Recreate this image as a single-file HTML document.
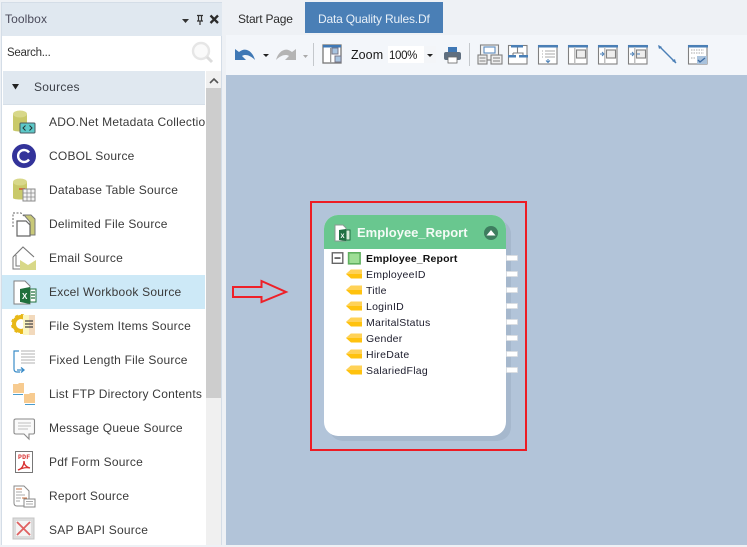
<!DOCTYPE html>
<html><head><meta charset="utf-8">
<style>
html,body{margin:0;padding:0}
body{width:747px;height:545px;position:relative;overflow:hidden;background:#eef1f5;font-family:"Liberation Sans",sans-serif;color:#333}
.a{position:absolute}
.t{position:absolute;white-space:nowrap;font-size:12px;line-height:16px}
.row{position:absolute;left:3px;width:202px;height:34px;overflow:hidden}
.row span{position:absolute;left:46px;top:9px;font-size:12px;line-height:16px;letter-spacing:.22px;white-space:nowrap;color:#3a3a3a}
svg{position:absolute;overflow:visible}
.f{position:absolute;left:366px;font-size:10.5px;line-height:14px;color:#1c1c2c;letter-spacing:.25px;white-space:nowrap}
.k{position:absolute;left:346px;width:16px;height:10px}
.p{position:absolute;left:506px;width:10px;height:4px;background:#fff;border:1px solid #d9dde2;border-radius:1px}
</style></head><body>

<!-- toolbox -->
<div class="a" style="left:1px;top:2px;width:221px;height:543px;background:#fff;border:1px solid #d4dde7;border-bottom:0;box-sizing:border-box"></div>
<div class="a" style="left:2px;top:3px;width:220px;height:33px;background:#e0e8f0"></div>
<div class="t" style="left:5px;top:11px;font-size:12px;color:#4a4a5a;letter-spacing:.1px">Toolbox</div>
<svg style="left:182px;top:14px" width="40" height="12">
<path d="M0 5h7l-3.500 4z" fill="#333"/>
<path d="M15 1.500h6M16.500 1.500v5.500M19.500 1.500v5.500M15 7h6M18 7v4" stroke="#333" stroke-width="1.200" fill="none"/>
<path d="M28.500 1.500l7.500 7.500M36 1.500L28.500 9" stroke="#2b2b2b" stroke-width="2.300"/>
</svg>
<div class="t" style="left:7px;top:45px;color:#333;font-size:11.500px;letter-spacing:-.28px">Search...</div>
<svg style="left:191px;top:41px" width="24" height="22">
<circle cx="10" cy="10" r="8" fill="#fafafa" stroke="#e6e6e6" stroke-width="2.400"/>
<path d="M16 16l5 5" stroke="#dcdcdc" stroke-width="3"/>
</svg>
<div class="a" style="left:3px;top:71px;width:202px;height:34px;background:#e0e8f0;border-bottom:1px solid #d6dfe8;box-sizing:border-box"></div>
<svg style="left:12px;top:84px" width="8" height="6"><path d="M0 0h7L3.500 5.500z" fill="#222"/></svg>
<div class="t" style="left:34px;top:79px;letter-spacing:.25px;color:#3c4048">Sources</div>

<!-- scrollbar -->
<div class="a" style="left:206px;top:71px;width:15px;height:474px;background:#f0f0f0"></div>
<div class="a" style="left:206px;top:88px;width:15px;height:310px;background:#cdcdcd"></div>
<svg style="left:209px;top:77px" width="10" height="7"><path d="M1 6l4-4 4 4" fill="none" stroke="#555" stroke-width="1.600"/></svg>

<!-- rows -->
<div class="row" style="top:105px"><span>ADO.Net Metadata Collection</span></div>
<div class="row" style="top:139px"><span>COBOL Source</span></div>
<div class="row" style="top:173px"><span>Database Table Source</span></div>
<div class="row" style="top:207px"><span>Delimited File Source</span></div>
<div class="row" style="top:241px"><span>Email Source</span></div>
<div class="row" style="top:275px;background:#cde9f7;left:2px;width:203px"><span style="left:47px">Excel Workbook Source</span></div>
<div class="row" style="top:309px"><span>File System Items Source</span></div>
<div class="row" style="top:343px"><span>Fixed Length File Source</span></div>
<div class="row" style="top:377px"><span>List FTP Directory Contents</span></div>
<div class="row" style="top:411px"><span>Message Queue Source</span></div>
<div class="row" style="top:445px"><span>Pdf Form Source</span></div>
<div class="row" style="top:479px"><span>Report Source</span></div>
<div class="row" style="top:513px"><span>SAP BAPI Source</span></div>

<!-- row icons -->
<svg style="left:13px;top:110px" width="24" height="24">
<path d="M0 4v16c0 2 14 2 14 0V4z" fill="#c9c96a"/><ellipse cx="7" cy="4" rx="7" ry="3.500" fill="#d8d88a"/>
<rect x="7" y="13" width="15" height="10" rx="1" fill="#5cc8c8" stroke="#4a5a60"/>
<path d="M12.500 15.500l-2.500 2.500 2.500 2.500M16.500 15.500l2.500 2.500-2.500 2.500" stroke="#233" fill="none"/>
</svg>
<svg style="left:12px;top:144px" width="24" height="24">
<circle cx="12" cy="12" r="12" fill="#33339a"/>
<path d="M17 8.500a6 6 0 1 0 0 7" fill="none" stroke="#fff" stroke-width="2.400"/>
</svg>
<svg style="left:13px;top:178px" width="23" height="24">
<path d="M0 4v16c0 2 14 2 14 0V4z" fill="#c9c96a"/><ellipse cx="7" cy="4" rx="7" ry="3.500" fill="#d8d88a"/>
<rect x="6" y="10" width="6" height="2" fill="#d0703c"/>
<rect x="10" y="11" width="12" height="12" fill="#f4f4f4" stroke="#8a8a8a"/>
<path d="M10 15h12M10 19h12M14 11v12M18 11v12" stroke="#8a8a8a" stroke-width=".8"/>
</svg>
<svg style="left:12px;top:212px" width="24" height="24">
<path d="M1 15V1h8l3 3" fill="none" stroke="#666" stroke-dasharray="2 1.500"/>
<path d="M12 3h7l4 4v16h-5V10z" fill="#c8c878" stroke="#777"/>
<path d="M5 9h9l4 4v11H5z" fill="#fff" stroke="#666" stroke-width="1.200"/>
</svg>
<svg style="left:12px;top:246px" width="25" height="24">
<path d="M1 11L11 1l11 10" fill="none" stroke="#777" stroke-width="1.100"/>
<path d="M1 11v12h7M4 9v11h5" fill="none" stroke="#777"/>
<path d="M8 14h16v10H8z" fill="#d8d888"/><path d="M8 14h16l-8 5z" fill="#fff"/>
</svg>
<svg style="left:13px;top:280px" width="24" height="24">
<path d="M1 1h11l5 5v18H1z" fill="#fff" stroke="#808080"/>
<path d="M7 9l10-2v17l-10-2z" fill="#20703c"/>
<rect x="17" y="9" width="6" height="13" fill="#fff" stroke="#20703c"/>
<path d="M18 12h4M18 15h4M18 18h4" stroke="#20703c" stroke-width="1.300"/>
<text x="9" y="19" font-size="8" font-weight="bold" fill="#fff" font-family="Liberation Sans">X</text>
</svg>
<svg style="left:12px;top:314px" width="24" height="22">
<circle cx="9" cy="10" r="7" fill="none" stroke="#e8b818" stroke-width="4"/>
<circle cx="9" cy="10" r="9" fill="none" stroke="#e8b818" stroke-width="2" stroke-dasharray="3 3"/>
<rect x="11" y="1" width="7" height="20" fill="#fbf6c0"/>
<path d="M17 1h6v20h-6z" fill="#f2d9bc"/>
<path d="M13 7h8M13 10h8M13 13h8" stroke="#444" stroke-width="1.300"/>
</svg>
<svg style="left:13px;top:350px" width="23" height="24">
<path d="M6 1H1v18c0 2 1 3 3 3h3" fill="none" stroke="#3a8cc8" stroke-width="1.200"/>
<path d="M8 1h14M8 4h14M8 7h14M8 10h14M8 13h14" stroke="#b0b0b0"/>
<path d="M4 20h6M8 17.500l3 2.500-3 2.500" fill="none" stroke="#3a8cc8" stroke-width="1.300"/>
</svg>
<svg style="left:13px;top:383px" width="23" height="24">
<path d="M0 1h5l1-1h5v10H0z" fill="#f7cb90"/><rect x="0" y="11" width="10" height="1" fill="#4a9ccc"/>
<path d="M11 11h5l1-1h5v10H11z" fill="#f7cb90"/><rect x="12" y="21" width="10" height="1" fill="#4a9ccc"/>
</svg>
<svg style="left:13px;top:418px" width="22" height="22">
<path d="M3 1h17q1.500 0 1.500 1.500v12q0 1.500-1.500 1.500h-4v5l-5-5H3q-2 0-2-1.500v-12Q1 1 3 1z" fill="#fafafa" stroke="#8a8a8a" stroke-width="1.100"/>
<path d="M5 5h13M5 8h13M5 11h10" stroke="#bdbdbd"/>
</svg>
<svg style="left:15px;top:451px" width="19" height="22">
<rect x=".5" y=".5" width="17" height="21" fill="#fff" stroke="#777"/>
<text x="3" y="8" font-size="6.500" font-weight="bold" fill="#d83030" font-family="Liberation Mono" letter-spacing=".2">PDF</text>
<path d="M3 19c4-1 6-5 6-9 0 4 2 6 6 7-4-1-8 0-12 2z" fill="none" stroke="#d83030" stroke-width="1.300"/>
</svg>
<svg style="left:13px;top:485px" width="23" height="23">
<path d="M1 1h10l5 5v15H4q-3 0-3-3z" fill="#fff" stroke="#888"/>
<path d="M3 4h6" stroke="#c87040"/><path d="M3 7h6M3 10h9M3 13h5M3 16h4" stroke="#aaa"/><path d="M9 13h5" stroke="#c87040"/>
<rect x="11" y="14" width="11" height="8" fill="#fff" stroke="#888"/><path d="M13 16.500h7M13 19h7" stroke="#aaa"/>
</svg>
<svg style="left:13px;top:518px" width="22" height="22">
<rect x="0" y="0" width="21" height="21" fill="#dcdcdc" stroke="#c4c4c4"/>
<rect x="3" y="3" width="15" height="15" fill="#f4f4f4"/>
<path d="M4 4l13 13M17 4L4 17" stroke="#e06060" stroke-width="1.800"/>
</svg>

<!-- tabs -->
<div class="t" style="left:238px;top:11px;letter-spacing:-.2px;color:#2d2d2d">Start Page</div>
<div class="a" style="left:305px;top:2px;width:138px;height:31px;background:#4a7fb6"></div>
<div class="t" style="left:318px;top:11px;color:#e8f0f8;letter-spacing:-.18px">Data Quality Rules.Df</div>

<!-- toolbar -->
<div class="a" style="left:226px;top:35px;width:521px;height:40px;background:#f3f6fa"></div>
<div class="a" style="left:226px;top:75px;width:521px;height:470px;background:#b2c4d9"></div>
<svg style="left:226px;top:35px" width="521" height="40" font-family="Liberation Sans">
<path d="M9 14V25H20L16 21C19 19 24 20 29 25C27 17 20 11 13 17z" fill="#3f78b5"/>
<path d="M37 19h6l-3 3z" fill="#222"/>
<path d="M70 14V25H59L63 21C60 19 55 20 50 25C52 17 59 11 66 17z" fill="#b4b4b4"/>
<path d="M77 20h5l-2.500 3z" fill="#aaa"/>
<rect x="87" y="8" width="1" height="23" fill="#c4c8cc"/>
<rect x="97" y="10" width="18" height="18" fill="#fff" stroke="#777" stroke-width="1.300"/>
<rect x="97" y="10" width="18" height="2.500" fill="#3f78b5"/>
<rect x="104" y="13" width="1.300" height="15" fill="#999"/>
<rect x="106" y="13" width="6" height="6" fill="#a8c4e0" stroke="#778"/>
<rect x="109" y="21" width="6" height="6" fill="#a8c4e0" stroke="#778"/>
<text x="125" y="24" font-size="12.500" fill="#1a1a1a" letter-spacing=".05">Zoom</text>
<rect x="162" y="11" width="48" height="17" fill="#fff"/>
<text x="163" y="24" font-size="11.500" fill="#1a1a1a" letter-spacing="-.35">100%</text>
<rect x="198" y="11" width="12" height="17" fill="#f3f5f8"/>
<path d="M201 19h6l-3 3z" fill="#222"/>
<rect x="222" y="12" width="9" height="6" fill="#3f78b5"/>
<rect x="218" y="17" width="17" height="8" rx="2" fill="#5f6f80"/>
<rect x="222" y="22" width="9" height="6" fill="#fff" stroke="#666" stroke-width=".8"/>
<rect x="243" y="8" width="1" height="23" fill="#c4c8cc"/>
</svg>

<!-- right toolbar icons -->
<svg style="left:478px;top:44px" width="240" height="24" fill="none">
<g stroke="#808080" stroke-width="1.100">
<rect x="2.500" y="1" width="18" height="15" fill="#f4f4f4"/><rect x="6" y="3" width="11" height="6" fill="#fff" stroke="#5a8abf"/>
<rect x="0" y="11" width="9" height="9" fill="#eee"/><rect x="13" y="11" width="11" height="9" fill="#eee"/>
<path d="M1.500 14h6M1.500 17h6M15 14h7M15 17h7"/>
<rect x="30.500" y="1.500" width="18.500" height="18.500" fill="#fff"/>
<rect x="60.500" y="1.500" width="18.500" height="18.500" fill="#fff"/>
<rect x="90.500" y="1.500" width="18.500" height="18.500" fill="#fff"/>
<rect x="120.500" y="1.500" width="18.500" height="18.500" fill="#fff"/>
<rect x="150.500" y="1.500" width="18.500" height="18.500" fill="#fff"/>
<rect x="210.500" y="1.500" width="18.500" height="18.500" fill="#fff"/>
<rect x="98.500" y="6" width="9" height="8" fill="#eee"/><rect x="128.500" y="6" width="9" height="8" fill="#eee"/><rect x="158.500" y="6" width="9" height="8" fill="#eee"/>
<path d="M39.500 3v6M35 9h10v3M35 9v3"/>
</g>
<g fill="#4a7fb6">
<rect x="33" y="1" width="12" height="2.500"/><rect x="30" y="11" width="8" height="2.500"/><rect x="41" y="11" width="9" height="2.500"/>
<rect x="60" y="1" width="20" height="2.500"/><rect x="90" y="1" width="20" height="2.500"/><rect x="120" y="1" width="20" height="2.500"/><rect x="150" y="1" width="20" height="2.500"/><rect x="210" y="1" width="20" height="2.500"/>
</g>
<path d="M64 7h1M64 10h1M64 13h1M67 7h10M67 10h10M67 13h10" stroke="#aaa"/>
<path d="M70 15v3M68 16.500l2 2 2-2" stroke="#4a7fb6"/>
<rect x="96" y="3" width="1.500" height="17" fill="#c0c0c0"/><rect x="126" y="3" width="1.500" height="17" fill="#c0c0c0"/><rect x="156" y="3" width="1.500" height="17" fill="#c0c0c0"/>
<path d="M122 10h3M124 8l2 2-2 2" stroke="#4a7fb6"/>
<path d="M152 10h3M154 8l2 2-2 2M162 10h-3" stroke="#4a7fb6"/>
<path d="M180 1l1 4 3-2zM198 19l-1-4-3 2z" fill="#4a7fb6"/><path d="M181 2l17 17" stroke="#4a7fb6" stroke-width="1.400"/>
<path d="M213 6h13M213 9h13M213 14h5" stroke="#aaa" stroke-dasharray="1.500 1"/>
<rect x="219" y="12" width="10" height="8" fill="#a9c2dc"/><path d="M220 16l2 2 5-4" stroke="#3f6ea5" stroke-width="1.300"/>
</svg>

<!-- red arrow -->
<svg style="left:232px;top:279px" width="58" height="26">
<path d="M1 8H29.500V2L54 13L29.500 23V18H1z" fill="none" stroke="#ee2028" stroke-width="2"/>
</svg>

<!-- red box -->
<div class="a" style="left:310px;top:201px;width:217px;height:250px;border:2px solid #ed1c24;box-sizing:border-box"></div>

<!-- entity -->
<div class="a" style="left:329px;top:220px;width:182px;height:221px;border-radius:14px;background:#a6b8cd"></div>
<div class="a" style="left:324px;top:215px;width:182px;height:221px;border-radius:14px;background:#fff;overflow:hidden">
<div class="a" style="left:0;top:0;width:182px;height:34px;background:#69c78f"></div>
</div>
<svg style="left:334px;top:224px" width="18" height="18">
<path d="M1 1h8l3 3v13H1z" fill="#fff" stroke="#8a9a92"/>
<path d="M5 6l7-1v12l-7-1z" fill="#1f6f42"/><rect x="12" y="6" width="4" height="10" fill="#d6ecd9" stroke="#1f6f42"/>
<text x="6.500" y="14" font-size="6" font-weight="bold" fill="#fff" font-family="Liberation Sans">X</text>
</svg>
<div class="t" style="left:357px;top:225px;font-size:13px;font-weight:bold;color:#f4fbf6">Employee_Report</div>
<svg style="left:484px;top:226px" width="14" height="14"><circle cx="7" cy="7" r="7" fill="#3e7d5f"/><path d="M2.500 9.500L7 4l4.500 5.500z" fill="#fff"/></svg>

<svg style="left:331px;top:252px" width="30" height="13">
<rect x="1.300" y=".8" width="10.500" height="10.500" fill="#fff" stroke="#666" stroke-width="1.400"/>
<rect x="3.500" y="5.300" width="6" height="1.500" fill="#444"/>
<rect x="17.600" y=".8" width="11.500" height="11" fill="#9ede96" stroke="#60b060" stroke-width="1.600"/>
</svg>
<div class="f" style="top:252px;font-weight:bold;color:#111;font-size:10.500px;letter-spacing:.15px">Employee_Report</div>
<div class="f" style="top:268px">EmployeeID</div>
<div class="f" style="top:284px">Title</div>
<div class="f" style="top:300px">LoginID</div>
<div class="f" style="top:316px">MaritalStatus</div>
<div class="f" style="top:332px">Gender</div>
<div class="f" style="top:348px">HireDate</div>
<div class="f" style="top:364px">SalariedFlag</div>

<svg class="k" style="top:269px" viewBox="0 0 16 10"><path d="M0 5l5-4.500h11v9H5z" fill="#ffc20e"/><path d="M0 5l5-4.500h11V5z" fill="#ffd257"/></svg>
<svg class="k" style="top:285px" viewBox="0 0 16 10"><path d="M0 5l5-4.500h11v9H5z" fill="#ffc20e"/><path d="M0 5l5-4.500h11V5z" fill="#ffd257"/></svg>
<svg class="k" style="top:301px" viewBox="0 0 16 10"><path d="M0 5l5-4.500h11v9H5z" fill="#ffc20e"/><path d="M0 5l5-4.500h11V5z" fill="#ffd257"/></svg>
<svg class="k" style="top:317px" viewBox="0 0 16 10"><path d="M0 5l5-4.500h11v9H5z" fill="#ffc20e"/><path d="M0 5l5-4.500h11V5z" fill="#ffd257"/></svg>
<svg class="k" style="top:333px" viewBox="0 0 16 10"><path d="M0 5l5-4.500h11v9H5z" fill="#ffc20e"/><path d="M0 5l5-4.500h11V5z" fill="#ffd257"/></svg>
<svg class="k" style="top:349px" viewBox="0 0 16 10"><path d="M0 5l5-4.500h11v9H5z" fill="#ffc20e"/><path d="M0 5l5-4.500h11V5z" fill="#ffd257"/></svg>
<svg class="k" style="top:365px" viewBox="0 0 16 10"><path d="M0 5l5-4.500h11v9H5z" fill="#ffc20e"/><path d="M0 5l5-4.500h11V5z" fill="#ffd257"/></svg>

<div class="p" style="top:255px"></div>
<div class="p" style="top:271px"></div>
<div class="p" style="top:287px"></div>
<div class="p" style="top:303px"></div>
<div class="p" style="top:319px"></div>
<div class="p" style="top:335px"></div>
<div class="p" style="top:351px"></div>
<div class="p" style="top:367px"></div>
</body></html>
